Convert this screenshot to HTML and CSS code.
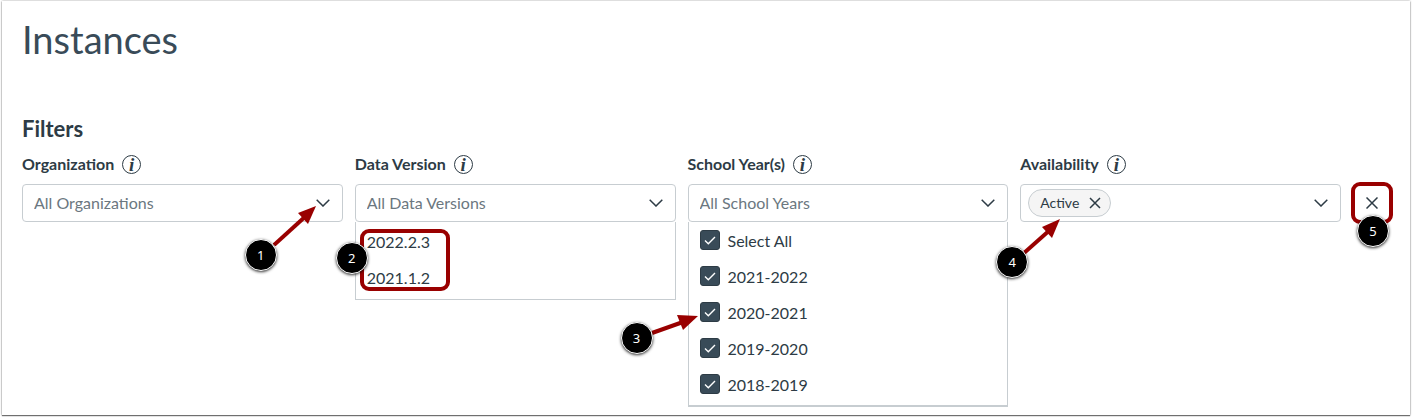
FILE: index.html
```html
<!DOCTYPE html>
<html lang="en">
<head>
  <meta charset="UTF-8" />
  <meta name="viewport" content="width=device-width, initial-scale=1" />
  <title>Instances</title>
  <link rel="stylesheet" href="styles.css">
</head>
<body>
  <main class="page">
    <h1>Instances</h1>
    <h2>Filters</h2>

    <div class="filters">
      <!-- Organization -->
      <div class="field">
        <div class="field-label">
          <label for="organization">Organization</label>
          <button class="info" type="button" aria-label="About Organization">i</button>
        </div>
        <div class="select">
          <input type="text" id="organization" role="combobox" aria-expanded="false" placeholder="All Organizations" />
          <svg class="chevron" viewBox="0 0 14 8"><path d="M0.7 0.7 7 7 13.3 0.7" /></svg>
        </div>
        <svg class="arrow arrow-1" viewBox="0 0 44 40"><path class="shaft" d="M1 39 34 9" /><path d="M43 0 25 7 35 18Z" /></svg>
        <span class="step step-1">1</span>
      </div>

      <!-- Data version -->
      <div class="field">
        <div class="field-label">
          <label for="version">Data Version</label>
          <button class="info" type="button" aria-label="About Data Version">i</button>
        </div>
        <div class="select">
          <input type="text" id="version" role="combobox" aria-expanded="true" aria-controls="versionList" placeholder="All Data Versions" />
          <svg class="chevron" viewBox="0 0 14 8"><path d="M0.7 0.7 7 7 13.3 0.7" /></svg>
        </div>
        <ul class="options" id="versionList" role="listbox">
          <li class="option" role="option">2022.2.3</li>
          <li class="option" role="option">2021.1.2</li>
        </ul>
        <span class="outline outline-versions"></span>
        <span class="step step-2">2</span>
      </div>

      <!-- School years -->
      <div class="field">
        <div class="field-label">
          <label for="years">School Year(s)</label>
          <button class="info" type="button" aria-label="About School Years">i</button>
        </div>
        <div class="select">
          <input type="text" id="years" role="combobox" aria-expanded="true" aria-controls="yearList" placeholder="All School Years" />
          <svg class="chevron" viewBox="0 0 14 8"><path d="M0.7 0.7 7 7 13.3 0.7" /></svg>
        </div>
        <div class="options tall" id="yearList">
          <label class="option"><input type="checkbox" checked />Select All</label>
          <label class="option"><input type="checkbox" checked />2021-2022</label>
          <label class="option"><input type="checkbox" checked />2020-2021</label>
          <label class="option"><input type="checkbox" checked />2019-2020</label>
          <label class="option"><input type="checkbox" checked />2018-2019</label>
        </div>
        <svg class="arrow arrow-3" viewBox="0 0 48 20"><path class="shaft" d="M1 18 32 7" /><path d="M47 1 26 0 32 15Z" /></svg>
        <span class="step step-3">3</span>
      </div>

      <!-- Availability -->
      <div class="field">
        <div class="field-label">
          <label for="availability">Availability</label>
          <button class="info" type="button" aria-label="About Availability">i</button>
        </div>
        <div class="select has-tag">
          <button class="tag" type="button"><span>Active</span>
            <svg viewBox="0 0 12 12"><path d="M1 1 11 11M11 1 1 11" /></svg>
          </button>
          <input type="text" id="availability" role="combobox" aria-expanded="false" />
          <svg class="chevron" viewBox="0 0 14 8"><path d="M0.7 0.7 7 7 13.3 0.7" /></svg>
        </div>
        <svg class="arrow arrow-4" viewBox="0 0 38 36"><path class="shaft" d="M1 34 28 10" /><path d="M37 0 19 8 29 19Z" /></svg>
        <span class="step step-4">4</span>
      </div>

      <div class="clear-wrap">
        <button class="clear" type="button" aria-label="Clear filters">
          <svg viewBox="0 0 12 12"><path d="M0.5 0.5 11.5 11.5M11.5 0.5 0.5 11.5" /></svg>
        </button>
        <span class="outline outline-clear"></span>
        <span class="step step-5">5</span>
      </div>
    </div>
  </main>
</body>
</html>
```
FILE: styles.css
```css
* {
  box-sizing: border-box;
}
body {
  margin: 0;
  padding: 1px 2px 3px;
  background: #fff;
  color: #2d3b45;
  font-family: Lato, "Liberation Sans", sans-serif;
  font-size: 16px;
}
.page {
  padding: 14px 19px 8px 20px;
  background: #fff;
  box-shadow: 0 1px 1px rgba(0,0,0,0.5), 0 0 2px rgba(0,0,0,0.4);
}
h1 {
  margin: 0 0 52px;
  font-size: 38px;
  font-weight: 400;
  line-height: 48px;
  color: #394b58;
}
h2 {
  margin: 0 0 11px;
  font-size: 22px;
  font-weight: 700;
  line-height: 28px;
}
.filters {
  display: grid;
  grid-template-columns: repeat(4, 1fr) 38px;
  gap: 12px;
  align-items: start;
}
.field {
  position: relative;
}
.field-label {
  display: flex;
  align-items: center;
  gap: 8px;
  height: 20px;
  margin-bottom: 10px;
  font-weight: 700;
}
.field-label label,
.tag span {
  padding-bottom: 2px;
}
button {
  padding: 0;
  border: none;
  background: none;
  color: inherit;
  font: inherit;
  cursor: pointer;
}
.info {
  width: 19px;
  height: 19px;
  border: 1px solid #2d3b45;
  border-radius: 50%;
  font: italic bold 19px/15px "Liberation Serif", serif;
}
.select {
  display: flex;
  align-items: center;
  height: 38px;
  padding: 0 12px 0 11px;
  border: 1px solid #c7cdd1;
  border-radius: 4px;
}
.select input {
  flex: 1;
  min-width: 0;
  padding: 0 0 2px;
  border: none;
  outline: none;
  background: none;
  color: inherit;
  font: inherit;
}
.select input::placeholder {
  color: #6b7780;
}
svg {
  fill: none;
  stroke: #2d3b45;
  stroke-width: 1.5;
}
.chevron {
  width: 14px;
  height: 8px;
}
.options {
  margin: 0;
  padding: 1px 0 4px;
  border: 1px solid #c7cdd1;
  border-top: none;
  list-style: none;
}
.options.tall {
  padding: 0 0 3px;
  border-bottom-width: 2px;
}
.option {
  display: flex;
  align-items: center;
  gap: 8px;
  height: 36px;
  padding: 0 11px;
}
.option input {
  appearance: none;
  width: 20px;
  height: 20px;
  margin: 0;
  border: 1px solid #2d3b45;
  border-radius: 3px;
  background: #394b58 url("data:image/svg+xml,%3Csvg xmlns='http://www.w3.org/2000/svg' viewBox='0 0 18 18'%3E%3Cpath d='M4 9.5 7.3 12.7 14 6' fill='none' stroke='white' stroke-width='1.4'/%3E%3C/svg%3E");
}
.has-tag {
  padding-left: 7px;
}
.tag {
  display: flex;
  align-items: center;
  gap: 10px;
  height: 28px;
  padding: 0 9px 0 11px;
  border: 1px solid #c7cdd1;
  border-radius: 14px;
  background: #f5f5f5;
  font-size: 14px;
}
.tag svg,
.clear svg {
  width: 12px;
  height: 12px;
}
.clear-wrap {
  position: relative;
  margin-top: 30px;
}
.clear {
  display: flex;
  align-items: center;
  justify-content: center;
  width: 38px;
  height: 38px;
}

/* Step callouts over the form */
.step {
  position: absolute;
  width: 32px;
  height: 32px;
  border: 1px solid #fff;
  border-radius: 50%;
  background: #000;
  box-shadow: 0 1px 3px rgba(0,0,0,0.8);
  color: #fff;
  font: 13px/30px "Noto Sans", sans-serif;
  text-align: center;
}
.outline {
  position: absolute;
  border: 4px solid #900;
  border-radius: 9px;
  pointer-events: none;
}
.arrow {
  position: absolute;
  fill: #900;
  stroke: none;
}
.arrow .shaft {
  stroke: #900;
  stroke-width: 4;
}
.step-1 { top: 85px; right: 66px; }
.step-2 { top: 88px; left: -19px; }
.step-3 { top: 168px; left: -67px; }
.step-4 { top: 92px; left: -24px; }
.step-5 { top: 31px; left: 4px; }
.arrow-1 { top: 52px; right: 26px; width: 44px; height: 40px; }
.arrow-3 { top: 161px; left: -37px; width: 48px; height: 20px; }
.arrow-4 { top: 65px; left: 3px; width: 38px; height: 36px; }
.outline-versions { top: 75px; left: 5px; width: 90px; height: 62px; }
.outline-clear { top: -2px; left: -2px; width: 42px; height: 42px; }
```
